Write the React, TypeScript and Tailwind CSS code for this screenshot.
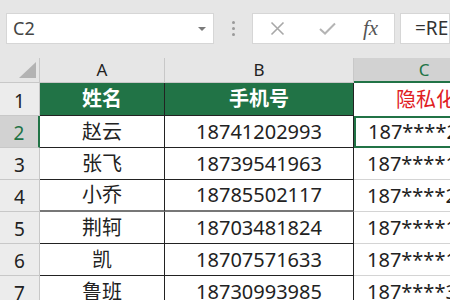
import React from "react";

const rows = [
  { n: "2", name: "赵云", phone: "18741202993" },
  { n: "3", name: "张飞", phone: "18739541963" },
  { n: "4", name: "小乔", phone: "18785502117" },
  { n: "5", name: "荆轲", phone: "18703481824" },
  { n: "6", name: "凯", phone: "18707571633" },
  { n: "7", name: "鲁班", phone: "18730993985" },
];

const mask = (p: string) => p.slice(0, 3) + "****" + p.slice(7);

const cellFont = {
  fontFamily: '"Noto Sans", "Noto Sans CJK SC", sans-serif',
};

export default function App() {
  return (
    <div
      className="w-[450px] h-[300px] overflow-hidden bg-white text-[#222]"
      style={cellFont}
    >
      {/* formula bar */}
      <div className="flex h-[58px] items-start bg-[#e6e6e6] pt-[13px]">
        <div className="ml-[6px] flex h-[31px] w-[208px] shrink-0 items-center justify-between border border-[#d6d6d6] bg-white pl-[6px] pr-[7px]">
          <span className="text-[18px] text-[#444]">C2</span>
          <span className="h-0 w-0 border-x-[4px] border-t-[4px] border-x-transparent border-t-[#7a7a7a]" />
        </div>
        <div className="ml-[18px] mt-[8px] flex shrink-0 flex-col gap-[3px]">
          <span className="h-[3px] w-[3px] rounded-full bg-[#9a9a9a]" />
          <span className="h-[3px] w-[3px] rounded-full bg-[#9a9a9a]" />
          <span className="h-[3px] w-[3px] rounded-full bg-[#9a9a9a]" />
        </div>
        <div className="ml-[17px] flex h-[31px] w-[143px] shrink-0 items-center border border-[#d6d6d6] bg-white">
          <svg className="ml-[17px]" width="15" height="15" viewBox="0 0 15 15">
            <path d="M1.5 1.5L13.5 13.5M13.5 1.5L1.5 13.5" stroke="#a8a8a8" strokeWidth="1.6" fill="none" />
          </svg>
          <svg className="ml-[34px]" width="17" height="13" viewBox="0 0 17 13">
            <path d="M1 7L6 11.5L16 1.5" stroke="#b4b4b4" strokeWidth="2" fill="none" />
          </svg>
          <span
            className="ml-[27px] text-[21px] italic text-[#555]"
            style={{ fontFamily: '"Liberation Serif", serif' }}
          >
            fx
          </span>
        </div>
        <div className="ml-[5px] flex h-[31px] min-w-0 flex-1 items-center overflow-hidden border border-[#d6d6d6] bg-white pl-[14px]">
          <span className="whitespace-nowrap text-[19px] text-[#333]">
            =REPLACE(B2,4,4,"****")
          </span>
        </div>
      </div>

      {/* column headers */}
      <div className="flex h-[25px] w-[494px]">
        <div className="flex w-[40px] items-end justify-end border-r border-b border-[#c8c8c8] bg-[#e6e6e6] pb-[4px] pr-[3px]">
          <svg width="17" height="16" viewBox="0 0 17 16">
            <path d="M17 0V16H0Z" fill="#b3b3b3" />
          </svg>
        </div>
        <div className="flex w-[125px] items-center justify-center border-r border-b border-[#c8c8c8] bg-[#e6e6e6] text-[17px]">
          A
        </div>
        <div className="flex w-[189px] items-center justify-center border-r border-b border-[#c8c8c8] bg-[#e6e6e6] text-[17px]">
          B
        </div>
        <div className="flex w-[140px] items-center justify-center border-b-2 border-[#217346] bg-[#d2d2d2] text-[17px] text-[#217346]">
          C
        </div>
      </div>

      {/* row 1 */}
      <div className="flex h-[33px] w-[494px]">
        <div className="flex w-[40px] items-center justify-center border-r border-b border-[#c8c8c8] bg-[#ececec] pt-[4px] text-[19px]">
          1
        </div>
        <div className="flex w-[125px] items-center justify-center border-r border-b border-[#222] bg-[#217346] text-[20px] font-bold text-white">
          姓名
        </div>
        <div className="flex w-[189px] items-center justify-center border-r border-b border-[#222] bg-[#217346] text-[20px] font-bold text-white">
          手机号
        </div>
        <div className="flex w-[140px] items-center whitespace-nowrap pl-[42px] text-[20px] text-[#e0201f]">
          隐私化手机号
        </div>
      </div>

      {rows.map((r) => {
        const sel = r.n === "2";
        const thick = r.n === "4";
        return (
          <div key={r.n} className="flex h-[32px] w-[494px]">
            <div
              className={
                sel
                  ? "flex w-[40px] items-center justify-center border-r-2 border-b border-r-[#217346] border-b-[#c8c8c8] bg-[#d2d2d2] pt-[4px] text-[19px] text-[#217346]"
                  : "flex w-[40px] items-center justify-center border-r border-b border-[#c8c8c8] bg-[#ececec] pt-[4px] text-[19px]"
              }
            >
              {r.n}
            </div>
            <div
              className={
                thick
                  ? "flex w-[125px] items-center justify-center border-r border-b-2 border-r-[#222] border-b-[#777] text-[20px]"
                  : "flex w-[125px] items-center justify-center border-r border-b border-[#222] text-[20px]"
              }
            >
              {r.name}
            </div>
            <div
              className={
                thick
                  ? "flex w-[189px] items-center justify-center border-r border-b-2 border-r-[#222] border-b-[#777] text-[20px]"
                  : "flex w-[189px] items-center justify-center border-r border-b border-[#222] text-[20px]"
              }
            >
              {r.phone}
            </div>
            <div
              className={
                sel
                  ? "flex w-[140px] items-center whitespace-nowrap border-2 border-[#217346] pl-[12px] text-[20px]"
                  : "flex w-[140px] items-center whitespace-nowrap border-b border-[#d4d4d4] pl-[13px] text-[20px]"
              }
            >
              {mask(r.phone)}
            </div>
          </div>
        );
      })}
    </div>
  );
}
